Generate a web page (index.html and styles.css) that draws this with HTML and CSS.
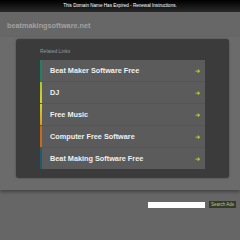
FILE: index.html
```html
<!DOCTYPE html>
<html lang="en">
<head>
    <meta charset="UTF-8">
    <title>beatmakingsoftware.net</title>
    <link rel="stylesheet" href="styles.css">
</head>
<body>
    <div class="topbar">This Domain Name Has Expired - Renewal Instructions.</div>

    <header>
        <h1>beatmakingsoftware.net</h1>
    </header>

    <div class="main">
        <div class="panel">
            <h2>Related Links</h2>
            <ul class="links">
                <li class="c1"><a href="#">Beat Maker Software Free</a><span class="arrow">&#10140;</span></li>
                <li class="c2"><a href="#">DJ</a><span class="arrow">&#10140;</span></li>
                <li class="c3"><a href="#">Free Music</a><span class="arrow">&#10140;</span></li>
                <li class="c4"><a href="#">Computer Free Software</a><span class="arrow">&#10140;</span></li>
                <li class="c5"><a href="#">Beat Making Software Free</a><span class="arrow">&#10140;</span></li>
            </ul>
        </div>
    </div>

    <div class="search">
        <input type="text" class="search-box">
        <button class="search-btn">Search Ads</button>
    </div>
</body>
</html>
```

FILE: styles.css
```css
body {
    margin: 0;
    font-family: "Liberation Sans", Arial, sans-serif;
    background-color: #666;
    color: #f5f5f5;
}

.topbar {
    height: 12px;
    line-height: 12px;
    text-align: center;
    font-size: 4.6px;
    color: #fff;
    background: linear-gradient(#000, #2a2a2a);
}

header {
    height: 25px;
    padding-left: 7px;
    background: #676767;
}

header h1 {
    margin: 0;
    padding-top: 9px;
    font-size: 7.3px;
    font-weight: bold;
    color: #a2a2a2;
}

.main {
    padding: 2px 11px 12px 16px;
    background: #6b6b6b;
    box-shadow: 0 2px 3px rgba(0, 0, 0, 0.35);
}

.panel {
    padding: 9px 0 9px 24px;
    background: #3b3b3b;
    border-radius: 3px;
    box-shadow: 0 0 2px rgba(0, 0, 0, 0.4);
}

.panel h2 {
    margin: 0 0 6px;
    font-size: 5px;
    font-weight: normal;
    color: #9a9a9a;
}

.links {
    list-style: none;
    margin: 0;
    padding: 0;
    width: 165px;
}

.links li {
    display: flex;
    align-items: center;
    justify-content: space-between;
    height: 21px;
    padding: 0 5px 0 10px;
    border-bottom: 1px solid #555;
}

.links li:last-child {
    border-bottom: none;
}

.links a {
    font-size: 7.3px;
    font-weight: bold;
    color: #f0f0f0;
    text-decoration: none;
}

.arrow {
    font-size: 6px;
    font-weight: bold;
    color: #b8d020;
}

.c1 { background: linear-gradient(#1f8068, #1f8068) left / 2px 100% no-repeat, #5b5b5b; }
.c2 { background: linear-gradient(#a8c830, #d8d030) left / 2px 100% no-repeat, #5b5b5b; }
.c3 { background: linear-gradient(#d8d030, #d0a020) left / 2px 100% no-repeat, #5b5b5b; }
.c4 { background: linear-gradient(#c86a1c, #c86a1c) left / 2px 100% no-repeat, #5b5b5b; }
.c5 { background: linear-gradient(#1f5a70, #1f5a70) left / 2px 100% no-repeat, #5b5b5b; }

.search {
    display: flex;
    justify-content: flex-end;
    align-items: center;
    gap: 4px;
    padding: 11px 4px 0 0;
}

.search-box {
    width: 57px;
    height: 6px;
    padding: 0;
    border: none;
    background: #fff;
}

.search-btn {
    padding: 1px 2px;
    font-family: "Liberation Sans", Arial, sans-serif;
    font-size: 4.5px;
    color: #b8c890;
    background: #363b26;
    border: none;
    cursor: pointer;
}
```
